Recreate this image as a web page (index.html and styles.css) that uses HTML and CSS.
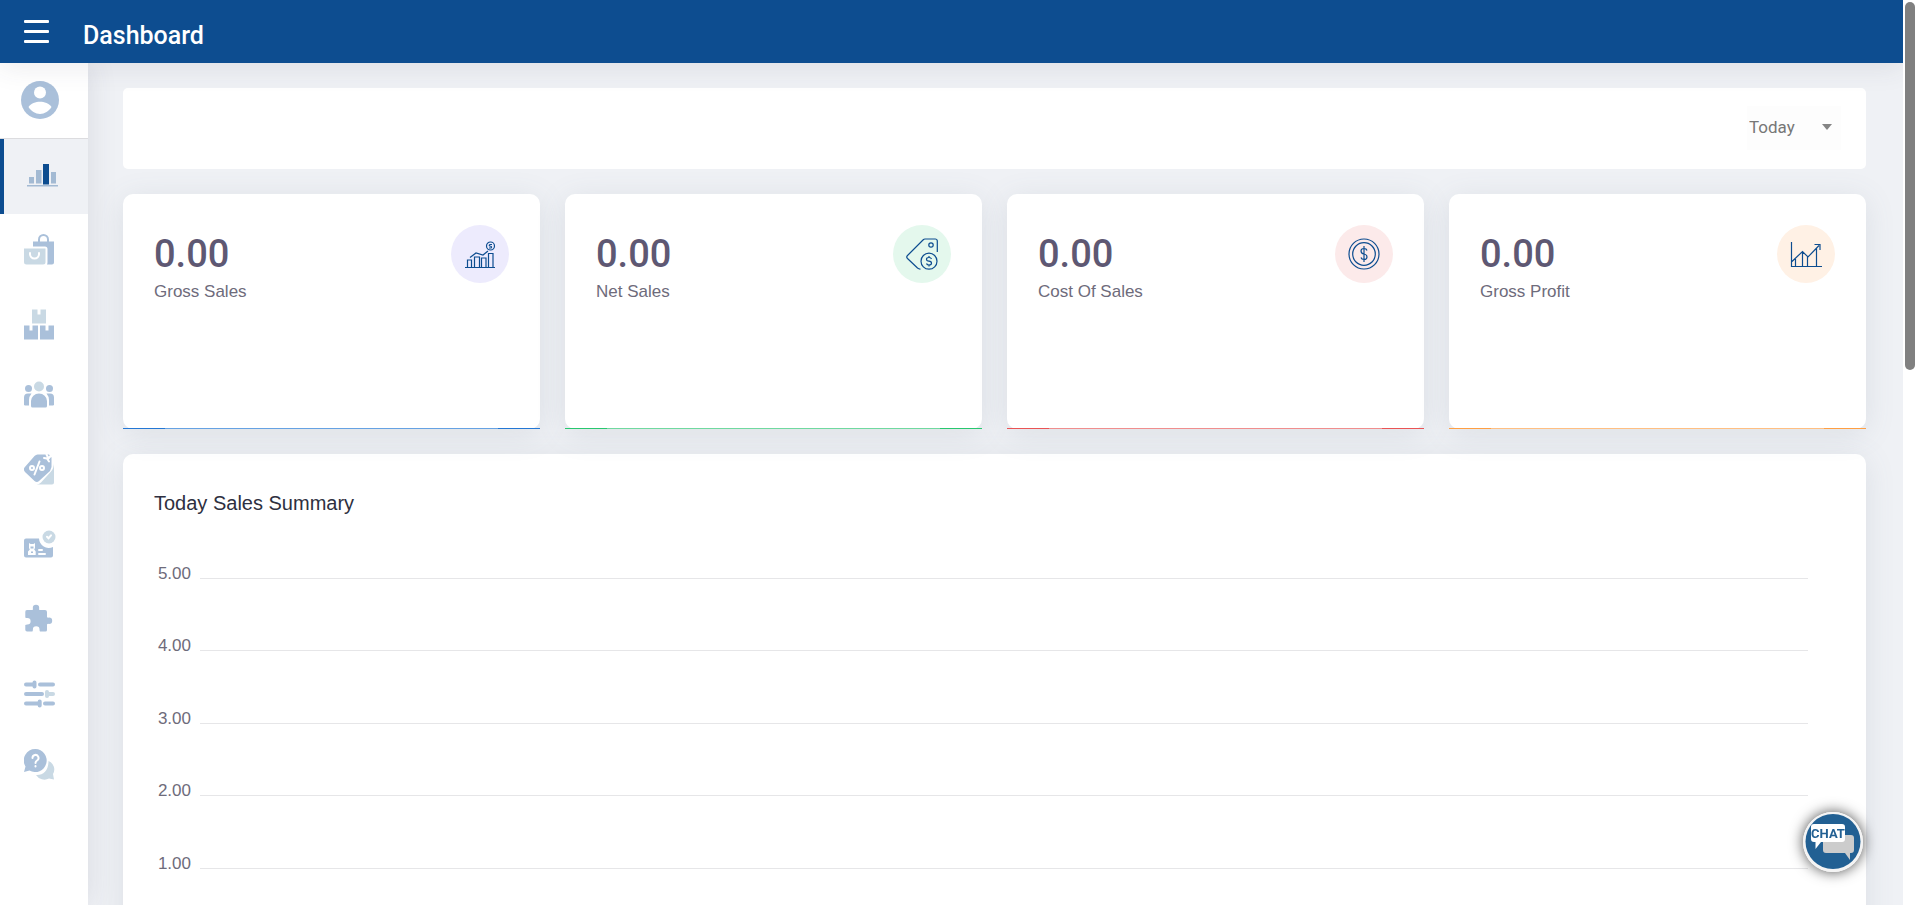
FILE: index.html
```html
<!DOCTYPE html>
<html lang="en">
<head>
    <meta charset="UTF-8">
    <meta name="viewport" content="width=device-width, initial-scale=1.0">
    <title>Dashboard</title>
    <link rel="stylesheet" href="styles.css">
</head>
<body>
    <div class="page">
        <header class="topbar">
            <button class="menu-btn" type="button" aria-label="Toggle menu">
                <span></span><span></span><span></span>
            </button>
            <h1>Dashboard</h1>
        </header>

        <div class="layout">
            <nav class="sidebar">
                <a class="avatar" href="#" aria-label="Profile">
                    <svg width="38" height="38" viewBox="0 0 38 38">
                        <circle class="c1" cx="19" cy="19" r="19"/>
                        <circle class="cw" cx="19" cy="11.5" r="6"/>
                        <path class="cw" d="M7.5 26C9.500 22.500 15 20.800 19 20.800S28.500 22.500 30.500 26C28 30 23.500 33 19 33S10 30 7.500 26z"/>
                    </svg>
                </a>
                <ul>
                    <li class="active">
                        <a href="#" aria-label="Dashboard">
                            <svg width="32" height="40" viewBox="0 0 32 40">
                                <path class="c3" d="M2 22h5v6.500H2zM9 15h5.500v13.500H9zM24 17h5v11.500h-5zM0 30h31v1.500H0z"/>
                                <path class="c4" d="M16 9h6v20.500h-6z"/>
                            </svg>
                        </a>
                    </li>
                    <li>
                        <a href="#" aria-label="Sales">
                            <svg width="32" height="40" viewBox="0 0 32 40">
                                <path class="l1" d="M15 11V8.500a4.500 4.500 0 0 1 9 0V11"/>
                                <path class="c1" d="M9 10.500h21V31.500a2 2 0 0 1-2 2h-5q.5-1 .5-2.500V18a2.500 2.500 0 0 0-2.500-2.500H9z"/>
                                <path class="c2" d="M0 17.500h21.500v13.500a2.500 2.500 0 0 1-2.500 2.500H2.500A2.500 2.500 0 0 1 0 31z"/>
                                <path class="lw" d="M6 22v1a4.500 4.500 0 0 0 9 0v-1"/>
                            </svg>
                        </a>
                    </li>
                    <li>
                        <a href="#" aria-label="Inventory">
                            <svg width="32" height="40" viewBox="0 0 32 40">
                                <path class="c2" d="M8 5.500h5.500v5h3v-5H22v14H8z"/>
                                <path class="c1" d="M0 21.500h5.500v5h3v-5H14v14H0zM16 21.500h5.500v5h3v-5H30v14H16z"/>
                            </svg>
                        </a>
                    </li>
                    <li>
                        <a href="#" aria-label="Customers">
                            <svg width="32" height="40" viewBox="0 0 32 40">
                                <circle class="c2" cx="15" cy="9.500" r="5"/>
                                <circle class="c1" cx="4.500" cy="11.500" r="3.500"/>
                                <circle class="c1" cx="25.500" cy="11.500" r="3.500"/>
                                <path class="c1" d="M7 29V24a8 7.500 0 0 1 16 0v5a1.500 1.500 0 0 1-1.500 1.500h-13A1.500 1.500 0 0 1 7 29zM0 28V20.500a4 4 0 0 1 4-4h3.500Q5 19.500 5 23v5.500H1zM30 28V20.500a4 4 0 0 0-4-4h-3.500Q25 19.500 25 23v5.500h4z"/>
                            </svg>
                        </a>
                    </li>
                    <li>
                        <a href="#" aria-label="Discounts">
                            <svg width="32" height="40" viewBox="0 0 32 40">
                                <path class="c2" d="M30 13v19.500a2 2 0 0 1-2 2H12.500q2.500 0 4.500-2l10-11Q30 18 30 13z"/>
                                <path class="c1" d="M13.500 4.500H25l2.500 3v9.500L26 21 15 31q-2 2-4.500 0L1 22q-2-2.500-.5-4.500L10.500 6q1.500-1.500 3-1.500z"/>
                                <path class="lw" d="M15.500 11.500l-5 13M20 8l3 .5 2 3M22.500 4.500l2 4M27.500 5l-3 3.500"/>
                                <circle class="lw" cx="8" cy="18" r="2"/>
                                <circle class="lw" cx="18" cy="18" r="2"/>
                            </svg>
                        </a>
                    </li>
                    <li>
                        <a href="#" aria-label="Employees">
                            <svg width="32" height="40" viewBox="0 0 32 40">
                                <path class="c1" d="M2 15.500h13a9.800 9.800 0 0 0 14 8.500v8.500a2 2 0 0 1-2 2H2a2 2 0 0 1-2-2v-15a2 2 0 0 1 2-2z"/>
                                <circle class="c2" cx="25" cy="14" r="6.500"/>
                                <path class="lw" d="M23 13.800l1.500 1.500 2.500-3M15 27h3M15 31h6"/>
                                <path class="cw" d="M5 20l1.500 1h3l1.500-1v5l-.8 1.500 1.500 2V32H4v-3.500l1.800-2L5 25z"/>
                                <path class="c1" d="M6.500 23.500h3v2h-3zM7 28.500h2v1.500H7z"/>
                            </svg>
                        </a>
                    </li>
                    <li>
                        <a href="#" aria-label="Integrations">
                            <svg width="32" height="40" viewBox="0 0 32 40">
                                <path class="c1" d="M3 14h5.500q.8-.5.3-2a3.200 3.200 0 1 1 6.400 0q-.5 1.500.3 2H21a2 2 0 0 1 2 2v5q.5 1 2 .5a3.200 3.200 0 1 1 0 6.400q-1.500-.5-2 .5v5.600a1.500 1.500 0 0 1-1.500 1.500H16q-.5-.5-.5-2a3.300 3.300 0 0 0-6.600 0q0 1.500-.5 2H3a1.700 1.700 0 0 1-1.700-1.700V29q.5-.5 2-.5a3.300 3.300 0 0 0 0-6.600q-1.500 0-2-.5V16A1.800 1.800 0 0 1 3 14z"/>
                            </svg>
                        </a>
                    </li>
                    <li>
                        <a href="#" aria-label="Settings">
                            <svg width="32" height="40" viewBox="0 0 32 40">
                                <path class="bar1" d="M2 15.500h7M16 15.500h13M2 25h16M2 34.500h13M21 34.500h8"/>
                                <path class="bar2" d="M25 25h4"/>
                                <path class="bar1" d="M10.500 13.500v4M15.700 32.500v4"/>
                                <path class="bar2" d="M23 23v4"/>
                            </svg>
                        </a>
                    </li>
                    <li>
                        <a href="#" aria-label="Help">
                            <svg width="32" height="40" viewBox="0 0 32 40">
                                <path class="c2" d="M24.500 19a9 9 0 0 1 4.500 13l1 5.500-5-1a10 10 0 0 1-13-3.500c7 .5 12.500-4 12.500-14z"/>
                                <path class="c1" d="M11.500 7a11.500 11.500 0 1 1-6 21.500L0 30 1.500 24.500A11.500 11.500 0 0 1 11.500 7z"/>
                                <path class="lw" d="M8.500 16a3 3 0 1 1 4.500 2.500q-1.500 1-1.500 2.500M11.500 24v.5"/>
                            </svg>
                        </a>
                    </li>
                </ul>
            </nav>

            <main>
                <section class="filter">
                    <label class="sr-only" for="period">Period</label>
                    <div class="select-wrap">
                        <select id="period">
                            <option>Today</option>
                            <option>Yesterday</option>
                            <option>This Week</option>
                            <option>This Month</option>
                        </select>
                    </div>
                </section>

                <section class="stats">
                    <div class="card stat blue">
                        <div>
                            <h2>0.00</h2>
                            <p>Gross Sales</p>
                        </div>
                        <div class="stat-icon">
                            <svg width="32" height="32" viewBox="0 0 32 32">
                                <path d="M1 29.500h30M3.500 29.500v-7.500h4v7.500M10.500 29.500V19h5v10.500M17.500 29.500v-9.500h4.500v9.500M24.500 29.500V15.500h4.500v14M6 19.500l6-4.500 7 2 5-4"/>
                                <circle cx="26.500" cy="8" r="4"/>
                                <path d="M28 6.500h-2q-1.500 1 0 1.500 2.500.5 1 2h-2"/>
                            </svg>
                        </div>
                    </div>
                    <div class="card stat green">
                        <div>
                            <h2>0.00</h2>
                            <p>Net Sales</p>
                        </div>
                        <div class="stat-icon">
                            <svg width="32" height="32" viewBox="0 0 32 32">
                                <path d="M31.300 14V3a2 2 0 0 0-2-2H19q-1 0-2 1L1.500 17.500q-1.500 1.500 0 3L11.500 30q1.500 1.200 3 1"/>
                                <circle cx="25" cy="7" r="2.200"/>
                                <circle cx="23" cy="23.200" r="8"/>
                                <path d="M25.500 21q-.5-1.500-2.500-1.500-2.500 0-2.500 1.800t2.500 1.900q2.500.3 2.500 2T23 27q-2 0-2.500-1.500M23 18v1.500M23 27v1.500"/>
                            </svg>
                        </div>
                    </div>
                    <div class="card stat red">
                        <div>
                            <h2>0.00</h2>
                            <p>Cost Of Sales</p>
                        </div>
                        <div class="stat-icon">
                            <svg width="32" height="32" viewBox="0 0 32 32">
                                <circle cx="16" cy="16" r="15"/>
                                <circle cx="16" cy="16" r="11.300"/>
                                <path d="M19 12.500q-.5-2-3-2-3 0-3 2.500t3 3 3 3T16 21.500q-2.500 0-3-2M16 8v16"/>
                            </svg>
                        </div>
                    </div>
                    <div class="card stat orange">
                        <div>
                            <h2>0.00</h2>
                            <p>Gross Profit</p>
                        </div>
                        <div class="stat-icon">
                            <svg width="32" height="32" viewBox="0 0 32 32">
                                <path d="M1.500 4v24.500H32M2 23.500l10.500-10 5.500 5.500L29 7.500M24.500 6.500H30V12M5.500 21v7M12.500 14v14M17.500 19v9M26.500 10v18"/>
                            </svg>
                        </div>
                    </div>
                </section>

                <section class="card summary">
                    <h3>Today Sales Summary</h3>
                    <ul class="chart">
                        <li><span>5.00</span></li>
                        <li><span>4.00</span></li>
                        <li><span>3.00</span></li>
                        <li><span>2.00</span></li>
                        <li><span>1.00</span></li>
                    </ul>
                </section>
            </main>
        </div>
    </div>

    <div class="scrollbar"></div>

    <button class="chat" type="button" aria-label="Chat">
        <svg width="60" height="60" viewBox="0 0 60 60">
            <circle cx="30" cy="30" r="30" fill="#f4f4f4"/>
            <circle cx="30" cy="29.500" r="27.500" fill="#226093"/>
            <path fill="#ccc" d="M23 23h25a3 3 0 0 1 3 3v12a3 3 0 0 1-3 3h-1v7l-5-7H23a3 3 0 0 1-3-3V26a3 3 0 0 1 3-3z"/>
            <path fill="#fff" d="M11 12h28a3 3 0 0 1 3 3v12a3 3 0 0 1-3 3H18l-5.500 7V30H11a3 3 0 0 1-3-3V15a3 3 0 0 1 3-3z"/>
            <text x="25" y="26" text-anchor="middle">CHAT</text>
        </svg>
    </button>
</body>
</html>
```
FILE: styles.css
```css
* {
    box-sizing: border-box;
}
body {
    margin: 0;
    height: 100vh;
    overflow: hidden;
    background-color: #fff;
    font-family: "Liberation Sans", Arial, sans-serif;
}
h1, h2, h3, p, ul {
    margin: 0;
    padding: 0;
}
ul {
    list-style: none;
}
.page {
    height: 100vh;
    margin-right: 12px;
    display: flex;
    flex-direction: column;
    background-color: #eff1f5;
    overflow: hidden;
}

/* top bar */
.topbar {
    position: relative;
    z-index: 3;
    flex: none;
    height: 63px;
    padding: 0 24px;
    display: flex;
    align-items: center;
    gap: 34px;
    background-color: #0d4d90;
    box-shadow: 0 4px 28px rgba(60, 60, 80, 0.1);
}
.topbar h1 {
    padding-top: 8px;
    color: #fff;
    font-family: Roboto, sans-serif;
    font-size: 25px;
    font-weight: 500;
}
.menu-btn {
    width: 25px;
    padding: 0;
    display: flex;
    flex-direction: column;
    gap: 7px;
    border: none;
    background: none;
    cursor: pointer;
}
.menu-btn span {
    height: 3px;
    border-radius: 1px;
    background-color: #fff;
}

.layout {
    flex: 1;
    min-height: 0;
    display: flex;
}

/* sidebar */
.sidebar {
    position: relative;
    z-index: 2;
    flex: none;
    width: 88px;
    background-color: #fff;
    box-shadow: 0 0 28px rgba(60, 60, 80, 0.12);
}
.sidebar a {
    display: flex;
    align-items: center;
    height: 73px;
    padding-left: 24px;
}
.sidebar .avatar {
    height: 76px;
    padding-left: 21px;
    padding-bottom: 2px;
    border-bottom: 1px solid #dcdcdf;
}
.sidebar .active a {
    height: 75px;
    padding-left: 23px;
    padding-bottom: 4px;
    border-left: 4px solid #0d4d90;
    background-color: #eff1f5;
}
.c1 { fill: #aac0da; }
.c2 { fill: #c9d9e4; }
.c3 { fill: #a3bad3; }
.c4 { fill: #0d4d90; }
.cw { fill: #fff; }
.l1, .lw, .bar1, .bar2 {
    fill: none;
    stroke: #aac0da;
    stroke-width: 2;
    stroke-linecap: round;
}
.lw {
    stroke: #fff;
}
.bar1, .bar2 {
    stroke-width: 4;
}
.bar2 {
    stroke: #c9d9e4;
}

/* content */
main {
    flex: 1;
    min-width: 0;
    padding: 25px 37px 0 35px;
    display: flex;
    flex-direction: column;
    gap: 25px;
}
.filter {
    flex: none;
    height: 81px;
    padding: 0 25px 2px;
    display: flex;
    align-items: center;
    justify-content: flex-end;
    border-radius: 5px;
    background-color: #fff;
}
.sr-only {
    position: absolute;
    width: 1px;
    height: 1px;
    overflow: hidden;
    clip-path: inset(50%);
}
.select-wrap {
    position: relative;
}
.select-wrap::after {
    content: "";
    position: absolute;
    right: 9px;
    top: 18px;
    border: 5px solid transparent;
    border-top: 6px solid #858585;
    border-bottom: none;
    pointer-events: none;
}
.select-wrap select {
    width: 94px;
    height: 44px;
    padding: 0 2px 2px;
    border: none;
    appearance: none;
    background-color: #fdfdfd;
    color: #777;
    font-family: Roboto, sans-serif;
    font-size: 17px;
}
.card {
    border-radius: 10px;
    background-color: #fff;
    box-shadow: 0 5px 30px rgba(90, 110, 125, 0.13);
}
.stats {
    flex: none;
    display: grid;
    grid-template-columns: repeat(4, 1fr);
    gap: 25px;
}
.stat {
    position: relative;
    height: 235px;
    padding: 31px;
    display: flex;
    justify-content: space-between;
}
.stat::after {
    content: "";
    position: absolute;
    left: 0;
    right: 0;
    bottom: 0;
    height: 1px;
    background: linear-gradient(to right, var(--line) 10%, var(--line-light) 10% 90%, var(--line) 90%);
}
.blue { --line: #2477d4; --line-light: #66a2e3; --tint: #edebfd; }
.green { --line: #28c76f; --line-light: #70d9a0; --tint: #e4f8ed; }
.red { --line: #ea5455; --line-light: #f08e8e; --tint: #fceaea; }
.orange { --line: #ff9f43; --line-light: #ffbf82; --tint: #fff1e5; }
.stat h2 {
    margin-top: 6px;
    color: #5e5873;
    font-family: Roboto, sans-serif;
    font-size: 38px;
    font-weight: 500;
    line-height: 46px;
}
.stat p {
    margin-top: 4px;
    color: #6e6b7b;
    font-size: 17px;
    line-height: 22px;
}
.stat-icon {
    width: 58px;
    height: 58px;
    display: flex;
    align-items: center;
    justify-content: center;
    border-radius: 50%;
    background-color: var(--tint);
}
.stat-icon svg {
    fill: none;
    stroke: #0d4d90;
    stroke-width: 1.2;
}
.summary {
    flex: none;
    padding: 36px 58px 30px 31px;
}
.summary h3 {
    color: #2e3040;
    font-size: 20px;
    font-weight: normal;
    line-height: 26px;
}
.chart {
    height: 408px;
    padding-top: 46px;
    display: flex;
    flex-direction: column;
}
.chart li {
    flex: 1;
    display: flex;
    gap: 9px;
}
.chart span {
    width: 37px;
    color: #6e6b7b;
    font-size: 17px;
    line-height: 24px;
    text-align: right;
}
.chart li::after {
    content: "";
    flex: 1;
    height: 1px;
    margin-top: 16px;
    background-color: #e6e6e8;
}

.scrollbar {
    position: fixed;
    top: 2px;
    right: 0;
    width: 10px;
    height: 368px;
    border-radius: 5px;
    background-color: #808080;
}

.chat {
    position: fixed;
    right: 52px;
    bottom: 33px;
    z-index: 4;
    width: 60px;
    height: 60px;
    padding: 0;
    border: none;
    border-radius: 50%;
    background: none;
    box-shadow: 0 0 14px rgba(0, 0, 0, 0.7);
    cursor: pointer;
}
.chat svg {
    display: block;
}
.chat text {
    fill: #226093;
    font-family: "Liberation Sans Narrow", Roboto, sans-serif;
    font-size: 13px;
    font-weight: 700;
}
```
